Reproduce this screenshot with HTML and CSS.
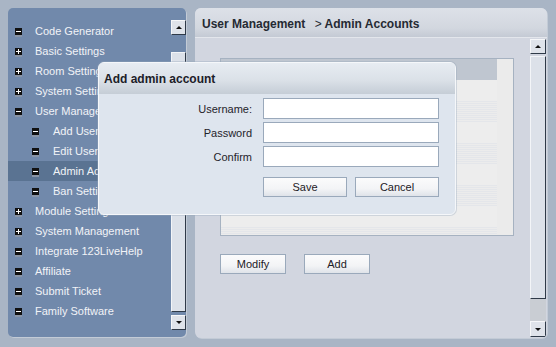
FILE: index.html
```html
<!DOCTYPE html>
<html>
<head>
<meta charset="utf-8">
<link rel="stylesheet" href="styles.css">
</head>
<body>
<div class="app">
  <aside class="sidebar">
    <ul class="menu">
      <li class="item"><svg class="ico" viewBox="0 0 7 9"><rect width="7" height="7" fill="#111"/><rect y="7" width="7" height="2" fill="#8a95a6"/><rect x="1" y="3" width="5" height="1" fill="#fff"/></svg><span>Code Generator</span></li>
      <li class="item"><svg class="ico" viewBox="0 0 7 9"><rect width="7" height="7" fill="#111"/><rect y="7" width="7" height="2" fill="#8a95a6"/><rect x="1" y="3" width="5" height="1" fill="#fff"/><rect x="3" y="1" width="1" height="5" fill="#fff"/></svg><span>Basic Settings</span></li>
      <li class="item"><svg class="ico" viewBox="0 0 7 9"><rect width="7" height="7" fill="#111"/><rect y="7" width="7" height="2" fill="#8a95a6"/><rect x="1" y="3" width="5" height="1" fill="#fff"/><rect x="3" y="1" width="1" height="5" fill="#fff"/></svg><span>Room Settings</span></li>
      <li class="item"><svg class="ico" viewBox="0 0 7 9"><rect width="7" height="7" fill="#111"/><rect y="7" width="7" height="2" fill="#8a95a6"/><rect x="1" y="3" width="5" height="1" fill="#fff"/><rect x="3" y="1" width="1" height="5" fill="#fff"/></svg><span>System Settings</span></li>
      <li class="item"><svg class="ico" viewBox="0 0 7 9"><rect width="7" height="7" fill="#111"/><rect y="7" width="7" height="2" fill="#8a95a6"/><rect x="1" y="3" width="5" height="1" fill="#fff"/></svg><span>User Management</span></li>
      <li class="item sub"><svg class="ico" viewBox="0 0 7 9"><rect width="7" height="7" fill="#111"/><rect y="7" width="7" height="2" fill="#8a95a6"/><rect x="1" y="3" width="5" height="1" fill="#fff"/></svg><span>Add User</span></li>
      <li class="item sub"><svg class="ico" viewBox="0 0 7 9"><rect width="7" height="7" fill="#111"/><rect y="7" width="7" height="2" fill="#8a95a6"/><rect x="1" y="3" width="5" height="1" fill="#fff"/></svg><span>Edit User</span></li>
      <li class="item sub active"><svg class="ico" viewBox="0 0 7 9"><rect width="7" height="7" fill="#111"/><rect y="7" width="7" height="2" fill="#8a95a6"/><rect x="1" y="3" width="5" height="1" fill="#fff"/></svg><span>Admin Accounts</span></li>
      <li class="item sub"><svg class="ico" viewBox="0 0 7 9"><rect width="7" height="7" fill="#111"/><rect y="7" width="7" height="2" fill="#8a95a6"/><rect x="1" y="3" width="5" height="1" fill="#fff"/></svg><span>Ban Settings</span></li>
      <li class="item"><svg class="ico" viewBox="0 0 7 9"><rect width="7" height="7" fill="#111"/><rect y="7" width="7" height="2" fill="#8a95a6"/><rect x="1" y="3" width="5" height="1" fill="#fff"/><rect x="3" y="1" width="1" height="5" fill="#fff"/></svg><span>Module Settings</span></li>
      <li class="item"><svg class="ico" viewBox="0 0 7 9"><rect width="7" height="7" fill="#111"/><rect y="7" width="7" height="2" fill="#8a95a6"/><rect x="1" y="3" width="5" height="1" fill="#fff"/><rect x="3" y="1" width="1" height="5" fill="#fff"/></svg><span>System Management</span></li>
      <li class="item"><svg class="ico" viewBox="0 0 7 9"><rect width="7" height="7" fill="#111"/><rect y="7" width="7" height="2" fill="#8a95a6"/><rect x="1" y="3" width="5" height="1" fill="#fff"/></svg><span>Integrate 123LiveHelp</span></li>
      <li class="item"><svg class="ico" viewBox="0 0 7 9"><rect width="7" height="7" fill="#111"/><rect y="7" width="7" height="2" fill="#8a95a6"/><rect x="1" y="3" width="5" height="1" fill="#fff"/></svg><span>Affiliate</span></li>
      <li class="item"><svg class="ico" viewBox="0 0 7 9"><rect width="7" height="7" fill="#111"/><rect y="7" width="7" height="2" fill="#8a95a6"/><rect x="1" y="3" width="5" height="1" fill="#fff"/></svg><span>Submit Ticket</span></li>
      <li class="item"><svg class="ico" viewBox="0 0 7 9"><rect width="7" height="7" fill="#111"/><rect y="7" width="7" height="2" fill="#8a95a6"/><rect x="1" y="3" width="5" height="1" fill="#fff"/></svg><span>Family Software</span></li>
    </ul>
    <div class="vscroll side-scroll">
      <div class="sbtn"><span class="arrow-up"></span></div>
      <div class="gap-track"></div>
      <div class="thumb side-thumb"></div>
      <div class="sbtn down-btn"><span class="arrow-down"></span></div>
    </div>
  </aside>

  <main class="panel">
    <div class="panel-title">User Management <span class="sep">&gt;</span> Admin Accounts</div>
    <div class="panel-body">
      <div class="content">
        <div class="table">
          <div class="trow head"><div class="cell"></div><div class="cell side"></div></div>
          <div class="trow"><div class="cell"></div><div class="cell side"></div></div>
          <div class="trow alt"><div class="cell"></div><div class="cell side"></div></div>
          <div class="trow"><div class="cell"></div><div class="cell side"></div></div>
          <div class="trow alt"><div class="cell"></div><div class="cell side"></div></div>
          <div class="trow"><div class="cell"></div><div class="cell side"></div></div>
          <div class="trow alt"><div class="cell"></div><div class="cell side"></div></div>
          <div class="trow"><div class="cell"></div><div class="cell side"></div></div>
          <div class="trow alt last"><div class="cell"></div><div class="cell side"></div></div>
        </div>
        <div class="actions">
          <button class="btn">Modify</button>
          <button class="btn">Add</button>
        </div>
      </div>
      <div class="vscroll main-scroll">
        <div class="sbtn"><span class="arrow-up"></span></div>
        <div class="thumb main-thumb"></div>
        <div class="grey-track"></div>
        <div class="sbtn down-btn main-down"><span class="arrow-down"></span></div>
      </div>
    </div>
  </main>

  <div class="dialog">
    <div class="dialog-title">Add admin account</div>
    <div class="dialog-body">
      <form class="form">
        <label class="lbl">Username:</label><input class="field" type="text">
        <label class="lbl">Password</label><input class="field" type="password">
        <label class="lbl">Confirm</label><input class="field" type="password">
        <span></span>
        <div class="dlg-actions">
          <button type="button" class="btn dbtn">Save</button>
          <button type="button" class="btn dbtn">Cancel</button>
        </div>
      </form>
    </div>
  </div>
</div>
</body>
</html>
```

FILE: styles.css
```css
* { box-sizing: border-box; }
html, body { margin: 0; padding: 0; }
body {
  width: 556px;
  height: 347px;
  overflow: hidden;
  background: #a9b5c5;
  font-family: "Liberation Sans", Arial, sans-serif;
  font-size: 11px;
}
.app {
  position: relative;
  display: flex;
  gap: 9px;
  padding: 8px 9px 9px 8px;
  height: 347px;
}

/* Sidebar */
.sidebar {
  width: 178px;
  height: 329px;
  background: #7189ab;
  border-radius: 5px;
  display: flex;
  box-shadow: 1px 1px 0 #c3cbd6;
}
.menu {
  list-style: none;
  margin: 0;
  padding: 13px 0 0 0;
  flex: 1;
}
.item {
  height: 20px;
  display: flex;
  align-items: center;
  padding-left: 7px;
  color: #f1f3f7;
  white-space: nowrap;
  overflow: hidden;
}
.item.sub { padding-left: 24px; }
.item.active { background: #5a7392; }
.ico {
  width: 7px;
  height: 9px;
  margin-right: 13px;
  margin-top: 2px;
  flex: none;
  shape-rendering: crispEdges;
}
.item.sub .ico { margin-right: 14px; }

.vscroll {
  width: 15px;
  display: flex;
  flex-direction: column;
}
.side-scroll { padding: 12px 0 7px 0; }
.sbtn {
  height: 15px;
  flex: none;
  background: #dfe3ea;
  border-top: 1px solid #f6f7f9;
  border-left: 1px solid #f6f7f9;
  border-right: 1px solid #2f3a48;
  border-bottom: 1px solid #2f3a48;
  display: flex;
  align-items: center;
  justify-content: center;
}
.arrow-up {
  width: 0; height: 0;
  border-left: 3px solid transparent;
  border-right: 3px solid transparent;
  border-bottom: 3px solid #111;
}
.arrow-down {
  width: 0; height: 0;
  border-left: 3px solid transparent;
  border-right: 3px solid transparent;
  border-top: 3px solid #111;
}
.gap-track { height: 17px; flex: none; }
.thumb {
  background: #dce1e9;
  border-top: 1px solid #f3f5f8;
  border-left: 1px solid #f3f5f8;
  border-right: 1px solid #2f3a48;
  border-bottom: 1px solid #2f3a48;
}
.side-thumb { flex: 1; margin-bottom: 3px; }

/* Main panel */
.panel {
  width: 352px;
  height: 330px;
  border-radius: 6px;
  background: #d2d6e0;
  display: flex;
  flex-direction: column;
  overflow: hidden;
  box-shadow: 1px 1px 0 #c3cbd6;
}
.panel-title {
  height: 29px;
  flex: none;
  background: linear-gradient(#dde1e8, #d2d7df 70%, #c4cad4);
  font-weight: bold;
  font-size: 12px;
  color: #252a33;
  padding: 9px 0 0 7px;
  white-space: nowrap;
}
.panel-title .sep { font-weight: normal; margin-left: 6px; }
.panel-body {
  flex: 1;
  display: flex;
  border-top: 1px solid #e3e6ec;
}
.content {
  flex: 1;
  padding: 20px 0 0 25px;
}
.table {
  width: 294px;
  height: 178px;
  border: 1px solid #a6b2c1;
  background: #ececec;
  overflow: hidden;
}
.trow {
  display: flex;
  height: 21px;
}
.trow .cell { flex: 1; }
.trow .cell.side { flex: none; width: 16px; background: #ebebeb; }
.trow.head { height: 21px; }
.trow.head .cell:first-child { background: #bfc6d0; }
.trow .cell:first-child { background: #ededed; }
.trow.alt .cell:first-child {
  background: repeating-linear-gradient(#e4e6ea 0 1px, #ececec 1px 2px);
}
.actions {
  display: flex;
  gap: 18px;
  margin-top: 18px;
}
.btn {
  width: 66px;
  height: 20px;
  font-family: "Liberation Sans", Arial, sans-serif;
  font-size: 11px;
  color: #1d2026;
  background: linear-gradient(#fbfbfc, #f3f4f6 60%, #dfe3e9);
  border: 1px solid #9aa9bb;
  padding: 0;
  margin: 0;
}

.main-scroll {
  width: 16px;
  margin-right: 1px;
  padding: 1px 0 1px 0;
}
.main-thumb { flex: 1; margin-top: 2px; }
.grey-track { height: 22px; flex: none; background: #c9cdd3; }
.main-down { height: 16px; }

/* Dialog */
.dialog {
  position: absolute;
  left: 98px;
  top: 62px;
  width: 358px;
  height: 153px;
  border: 1px solid #f5f7fa;
  border-radius: 6px;
  background: #dee5ee;
  overflow: hidden;
  box-shadow: 0 0 0 1px rgba(150,165,185,0.35);
}
.dialog-title {
  height: 31px;
  background: linear-gradient(#e7ecf2, #dbe1e8 55%, #c5cdd6);
  font-weight: bold;
  font-size: 12px;
  color: #1c2028;
  padding: 9px 0 0 5px;
}
.dialog-body { padding: 4px 0 0 0; }
.form {
  display: grid;
  grid-template-columns: 153px 176px;
  column-gap: 11px;
  row-gap: 3px;
  align-items: center;
}
.lbl {
  text-align: right;
  color: #1f232a;
}
.field {
  width: 176px;
  height: 21px;
  border: 1px solid #9aa9bb;
  background: #fff;
  margin: 0;
  padding: 0;
}
.dlg-actions {
  display: flex;
  gap: 8px;
  margin-top: 7px;
}
.dbtn { width: 84px; }
```
